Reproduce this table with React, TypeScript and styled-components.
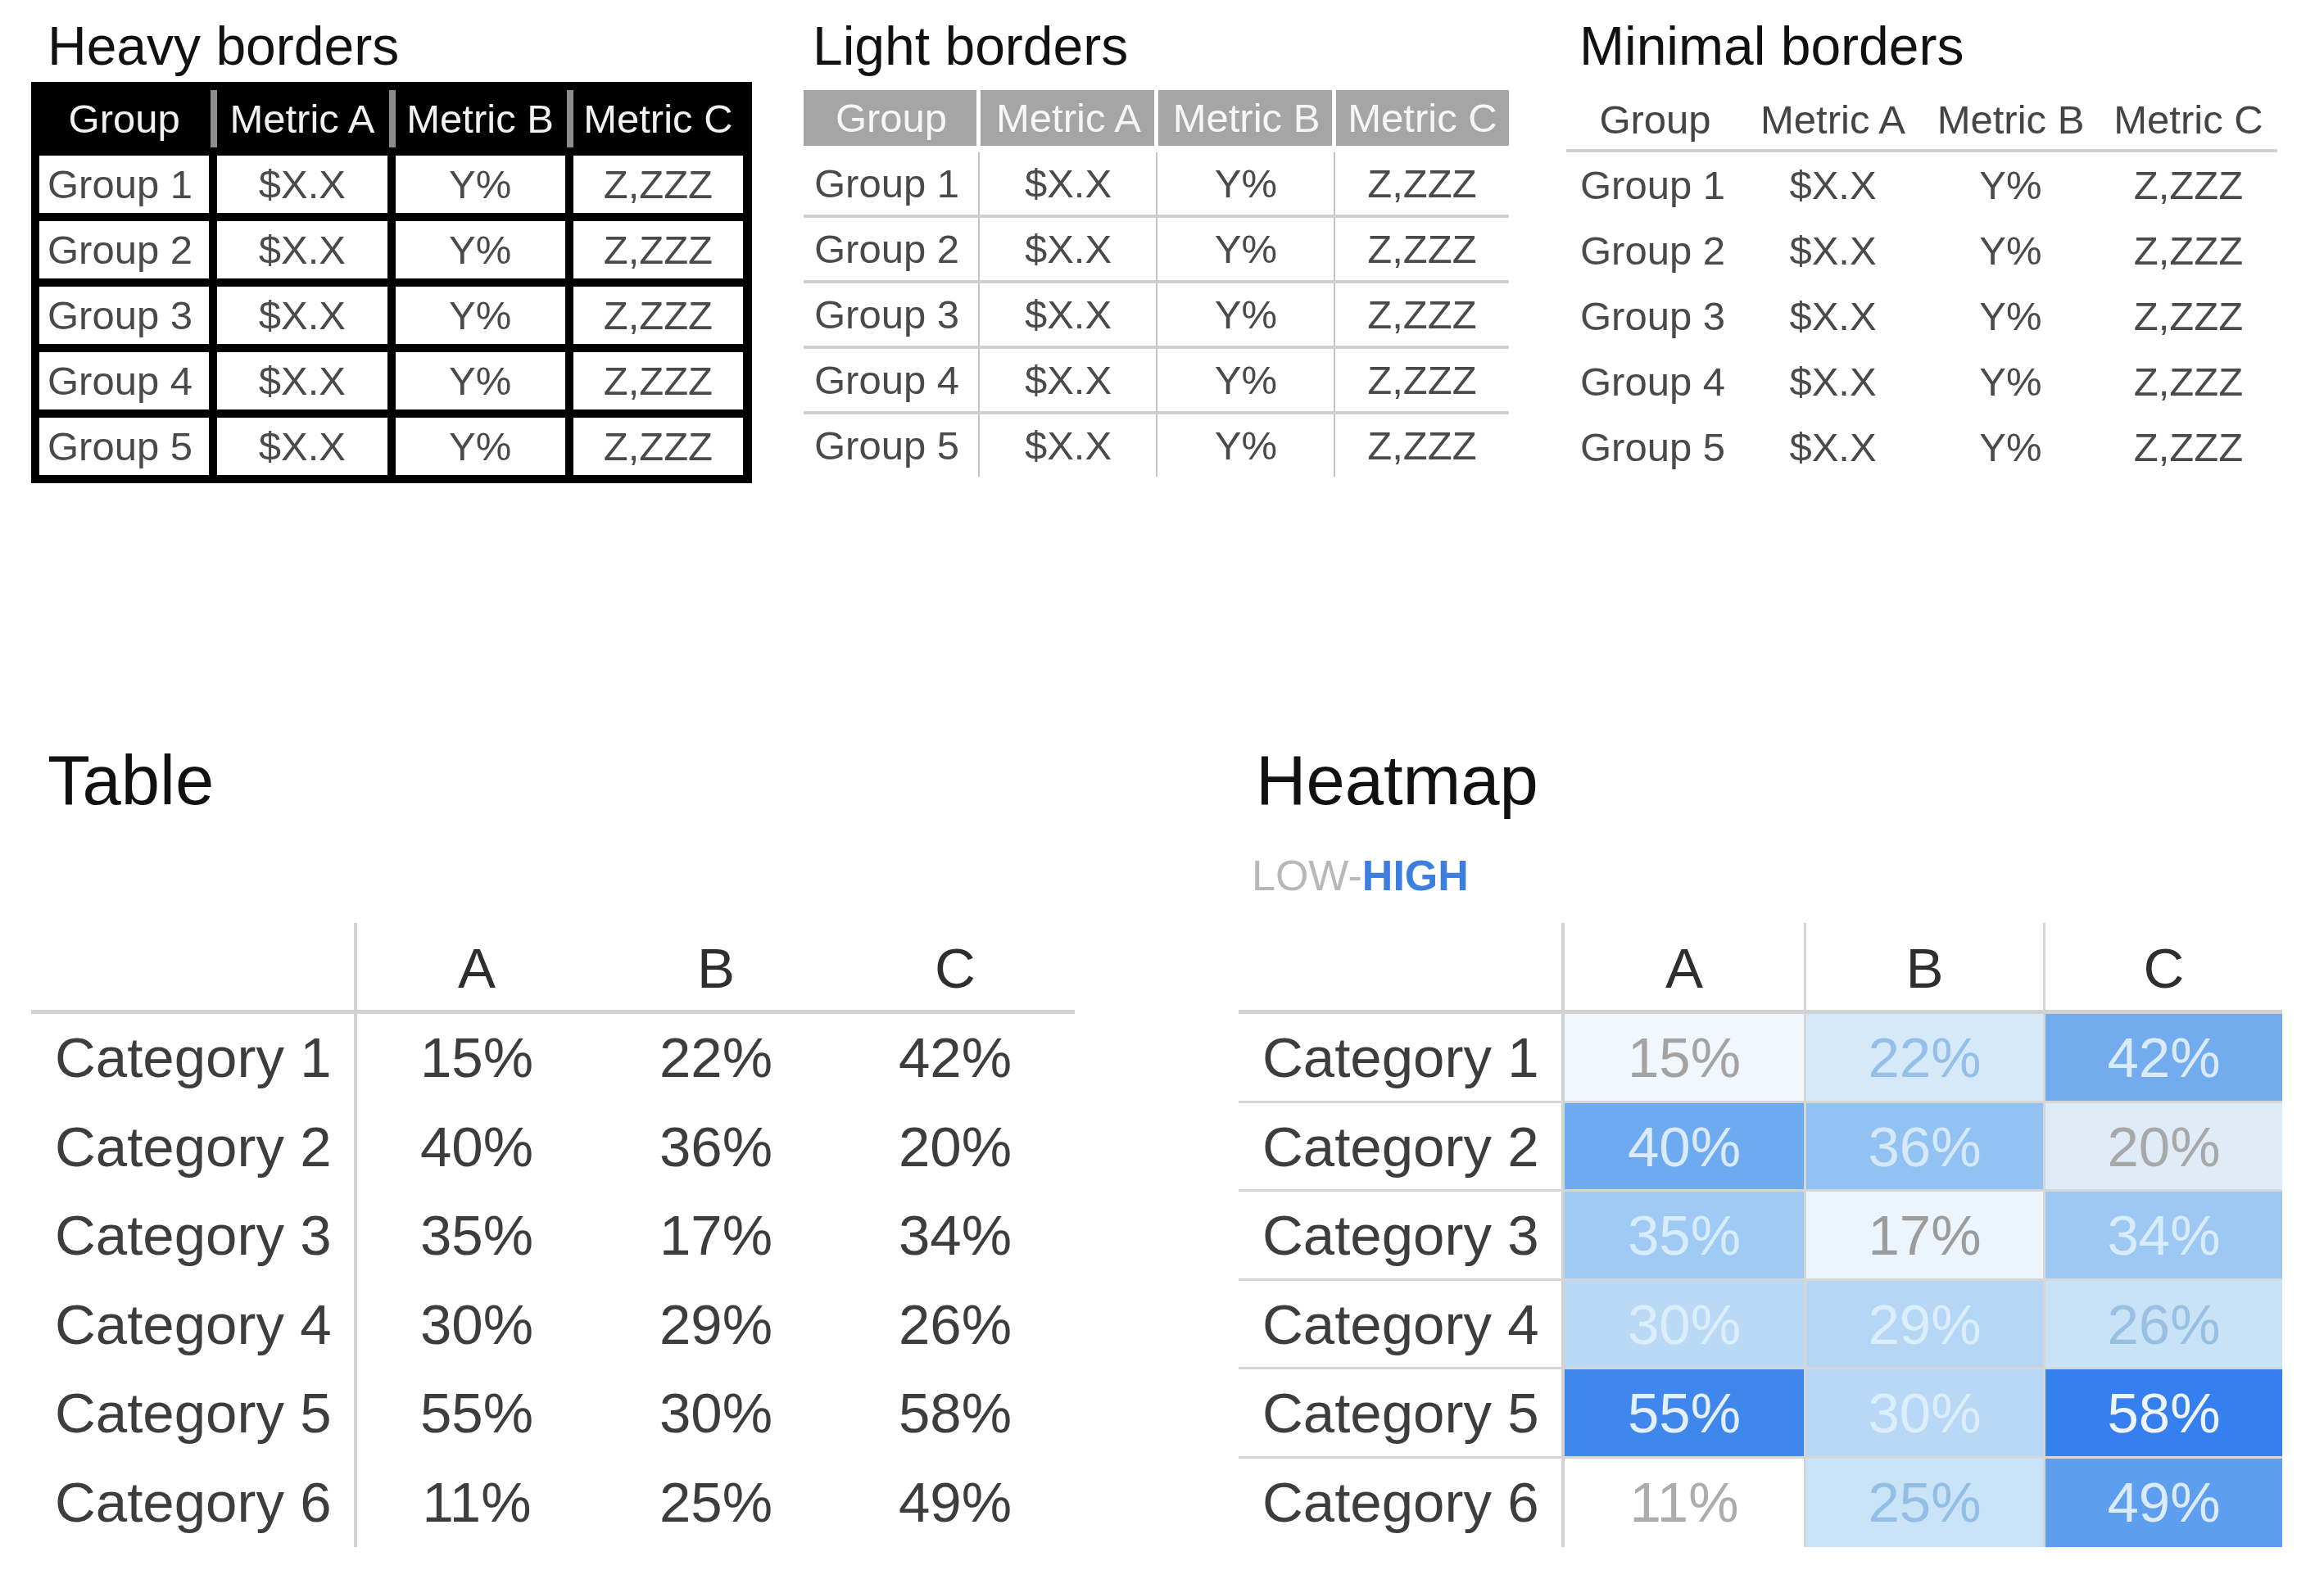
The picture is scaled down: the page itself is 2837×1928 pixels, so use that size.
import styled, { createGlobalStyle, css } from "styled-components";

const GlobalStyle = createGlobalStyle`
  html, body {
    margin: 0;
    padding: 0;
    background: #fff;
  }
  body {
    font-family: "Liberation Sans", Arial, Helvetica, sans-serif;
  }
`;

const Page = styled.div`
  width: 2837px;
  min-height: 1928px;
  box-sizing: border-box;
  padding: 18px 0 0 38px;
  background: #fff;
  color: #111;
`;

// ---- top row: three border styles ----

const TopRow = styled.section`
  display: grid;
  grid-template-columns: 943px 931px 868px;
  align-items: start;
`;

const Panel = styled.div`
  display: flex;
  flex-direction: column;
`;

const SmallTitle = styled.h2<{ $indent: number }>`
  margin: 0;
  padding-left: ${(p) => p.$indent}px;
  font-size: 66px;
  line-height: 76px;
  font-weight: 400;
  color: #111;
`;

const HeavyGrid = styled.div`
  display: grid;
  grid-template-columns: repeat(4, 1fr);
  gap: 10px;
  width: 880px;
  box-sizing: border-box;
  margin-top: 6px;
  padding: 0 11px 10px 10px;
  background: #000;
`;

const HeavyHead = styled.div<{ $divider?: boolean }>`
  margin-top: 10px;
  height: 70px;
  line-height: 70px;
  font-size: 49px;
  text-align: center;
  white-space: nowrap;
  color: #f2f2f2;
  ${(p) =>
    p.$divider &&
    css`
      margin-left: -8px;
      border-left: 8px solid #8c8c8c;
    `}
`;

const HeavyCell = styled.div<{ $lead?: boolean }>`
  height: 70px;
  line-height: 70px;
  font-size: 49px;
  white-space: nowrap;
  background: #fff;
  color: #4a4a4a;
  text-align: ${(p) => (p.$lead ? "left" : "center")};
  padding-left: ${(p) => (p.$lead ? "10px" : "0")};
`;

const LightGrid = styled.div`
  display: grid;
  grid-template-columns: 214px 217px 217px 213px;
  width: 861px;
  margin-top: 16px;
`;

const LightHead = styled.div<{ $divider?: boolean }>`
  height: 68px;
  line-height: 68px;
  margin-bottom: 8px;
  font-size: 49px;
  text-align: center;
  white-space: nowrap;
  background: #a5a5a5;
  color: #f6f6f6;
  ${(p) =>
    p.$divider &&
    css`
      margin-left: -3px;
      border-left: 5px solid #fff;
    `}
`;

const LightCell = styled.div<{ $lead?: boolean; $divider?: boolean; $last?: boolean }>`
  box-sizing: border-box;
  height: ${(p) => (p.$last ? "76px" : "80px")};
  line-height: 76px;
  font-size: 49px;
  white-space: nowrap;
  color: #4a4a4a;
  text-align: ${(p) => (p.$lead ? "left" : "center")};
  padding-left: ${(p) => (p.$lead ? "13px" : "0")};
  border-bottom: ${(p) => (p.$last ? "none" : "4px solid #d0d0d0")};
  ${(p) =>
    p.$divider &&
    css`
      margin-left: -1px;
      border-left: 2px solid #c4c4c4;
    `}
`;

const MinimalGrid = styled.div`
  display: grid;
  grid-template-columns: repeat(4, 217px);
  width: 868px;
  margin-top: 16px;
`;

const MinimalHead = styled.div`
  box-sizing: border-box;
  height: 76px;
  line-height: 72px;
  font-size: 49px;
  text-align: center;
  white-space: nowrap;
  color: #444;
  border-bottom: 4px solid #d0d0d0;
`;

const MinimalCell = styled.div<{ $lead?: boolean }>`
  height: 80px;
  line-height: 80px;
  font-size: 49px;
  white-space: nowrap;
  color: #4a4a4a;
  text-align: ${(p) => (p.$lead ? "left" : "center")};
  padding-left: ${(p) => (p.$lead ? "17px" : "0")};
`;

// ---- bottom row: table vs heatmap ----

const BottomRow = styled.section`
  display: grid;
  grid-template-columns: 1474px 1274px;
  margin-top: 314px;
  align-items: start;
`;

const PanelHead = styled.div`
  height: 223px;
`;

const BigTitle = styled.h2<{ $indent: number }>`
  margin: 0;
  padding-left: ${(p) => p.$indent}px;
  font-size: 85px;
  line-height: 97px;
  font-weight: 400;
  color: #111;
`;

const Legend = styled.div<{ $indent: number }>`
  margin-top: 39px;
  padding-left: ${(p) => p.$indent}px;
  font-size: 52px;
  line-height: 58px;
  color: #b8b8b8;
`;

const LegendHigh = styled.span`
  color: #3d7fe0;
  font-weight: 700;
`;

const MatrixGrid = styled.div`
  display: grid;
  grid-template-columns: 398px repeat(3, 1fr);
  width: 1274px;
`;

const Corner = styled.div`
  box-sizing: border-box;
  height: 111px;
  border-right: 4px solid #d2d2d2;
  border-bottom: 5px solid #d2d2d2;
`;

const ColHead = styled.div<{ $divider?: boolean }>`
  box-sizing: border-box;
  height: 111px;
  padding-top: 5px;
  line-height: 101px;
  font-size: 69px;
  text-align: center;
  color: #2e2e2e;
  border-bottom: 5px solid #d2d2d2;
  ${(p) =>
    p.$divider &&
    css`
      border-left: 3px solid #d6d6d6;
    `}
`;

const RowLabel = styled.div<{ $ruled?: boolean }>`
  box-sizing: border-box;
  height: 108.5px;
  line-height: 108px;
  padding-left: 29px;
  font-size: 69px;
  white-space: nowrap;
  color: #3d3d3d;
  border-right: 4px solid #d2d2d2;
  border-bottom: ${(p) => (p.$ruled ? "3px solid #d6d6d6" : "none")};
`;

const ValueCell = styled.div<{ $bg: string; $fg: string; $ruled?: boolean; $divider?: boolean }>`
  box-sizing: border-box;
  height: 108.5px;
  line-height: 108px;
  font-size: 69px;
  text-align: center;
  background: ${(p) => p.$bg};
  color: ${(p) => p.$fg};
  border-bottom: ${(p) => (p.$ruled ? "3px solid #d6d6d6" : "none")};
  ${(p) =>
    p.$divider &&
    css`
      border-left: 3px solid #d6d6d6;
    `}
`;

const metricHeads = ["Group", "Metric A", "Metric B", "Metric C"];
const groups = [1, 2, 3, 4, 5].map((n) => ["Group " + n, "$X.X", "Y%", "Z,ZZZ"]);

type Cell = [number, string, string];

const heat: { label: string; cells: Cell[] }[] = [
  { label: "Category 1", cells: [[15, "#f0f8fd", "#a3a3a3"], [22, "#d5e9f9", "#93bfe8"], [42, "#72acef", "#dcebfc"]] },
  { label: "Category 2", cells: [[40, "#6eaaef", "#dcebfc"], [36, "#92c2f2", "#d6e9fb"], [20, "#dfecf7", "#a8a8a8"]] },
  { label: "Category 3", cells: [[35, "#9ecaf4", "#d9ecfc"], [17, "#ebf5fb", "#9c9c9c"], [34, "#9cc8f3", "#d9ecfc"]] },
  { label: "Category 4", cells: [[30, "#b9d9f5", "#dcedfb"], [29, "#b5d6f4", "#dcedfb"], [26, "#c8e2f6", "#98c0e3"]] },
  { label: "Category 5", cells: [[55, "#3f87ec", "#e4f0fd"], [30, "#b8d8f5", "#dcedfb"], [58, "#3580ee", "#eef5fe"]] },
  { label: "Category 6", cells: [[11, "#ffffff", "#acacac"], [25, "#c9e3f7", "#93bee5"], [49, "#5d9eee", "#dcebfc"]] },
];

const cols = ["A", "B", "C"];

function HeavyTable() {
  return (
    <HeavyGrid>
      {metricHeads.map((h, i) => (
        <HeavyHead key={h} $divider={i > 0}>
          {h}
        </HeavyHead>
      ))}
      {groups.map((row) =>
        row.map((v, i) => (
          <HeavyCell key={row[0] + i} $lead={i === 0}>
            {v}
          </HeavyCell>
        ))
      )}
    </HeavyGrid>
  );
}

function LightTable() {
  return (
    <LightGrid>
      {metricHeads.map((h, i) => (
        <LightHead key={h} $divider={i > 0}>
          {h}
        </LightHead>
      ))}
      {groups.map((row, r) =>
        row.map((v, i) => (
          <LightCell key={row[0] + i} $lead={i === 0} $divider={i > 0} $last={r === groups.length - 1}>
            {v}
          </LightCell>
        ))
      )}
    </LightGrid>
  );
}

function MinimalTable() {
  return (
    <MinimalGrid>
      {metricHeads.map((h) => (
        <MinimalHead key={h}>{h}</MinimalHead>
      ))}
      {groups.map((row) =>
        row.map((v, i) => (
          <MinimalCell key={row[0] + i} $lead={i === 0}>
            {v}
          </MinimalCell>
        ))
      )}
    </MinimalGrid>
  );
}

function Matrix({ shaded }: { shaded: boolean }) {
  return (
    <MatrixGrid>
      <Corner />
      {cols.map((c, i) => (
        <ColHead key={c} $divider={shaded && i > 0}>
          {c}
        </ColHead>
      ))}
      {heat.map((row, r) => {
        const ruled = shaded && r < heat.length - 1;
        return [
          <RowLabel key={row.label} $ruled={ruled}>
            {row.label}
          </RowLabel>,
          ...row.cells.map(([v, bg, fg], i) => (
            <ValueCell
              key={row.label + i}
              $bg={shaded ? bg : "transparent"}
              $fg={shaded ? fg : "#3d3d3d"}
              $ruled={ruled}
              $divider={shaded && i > 0}
            >
              {v}%
            </ValueCell>
          )),
        ];
      })}
    </MatrixGrid>
  );
}

export default function App() {
  return (
    <>
      <GlobalStyle />
      <Page>
        <TopRow>
          <Panel>
            <SmallTitle $indent={20}>Heavy borders</SmallTitle>
            <HeavyTable />
          </Panel>
          <Panel>
            <SmallTitle $indent={11}>Light borders</SmallTitle>
            <LightTable />
          </Panel>
          <Panel>
            <SmallTitle $indent={16}>Minimal borders</SmallTitle>
            <MinimalTable />
          </Panel>
        </TopRow>
        <BottomRow>
          <Panel>
            <PanelHead>
              <BigTitle $indent={20}>Table</BigTitle>
            </PanelHead>
            <Matrix shaded={false} />
          </Panel>
          <Panel>
            <PanelHead>
              <BigTitle $indent={21}>Heatmap</BigTitle>
              <Legend $indent={16}>
                LOW-<LegendHigh>HIGH</LegendHigh>
              </Legend>
            </PanelHead>
            <Matrix shaded />
          </Panel>
        </BottomRow>
      </Page>
    </>
  );
}
